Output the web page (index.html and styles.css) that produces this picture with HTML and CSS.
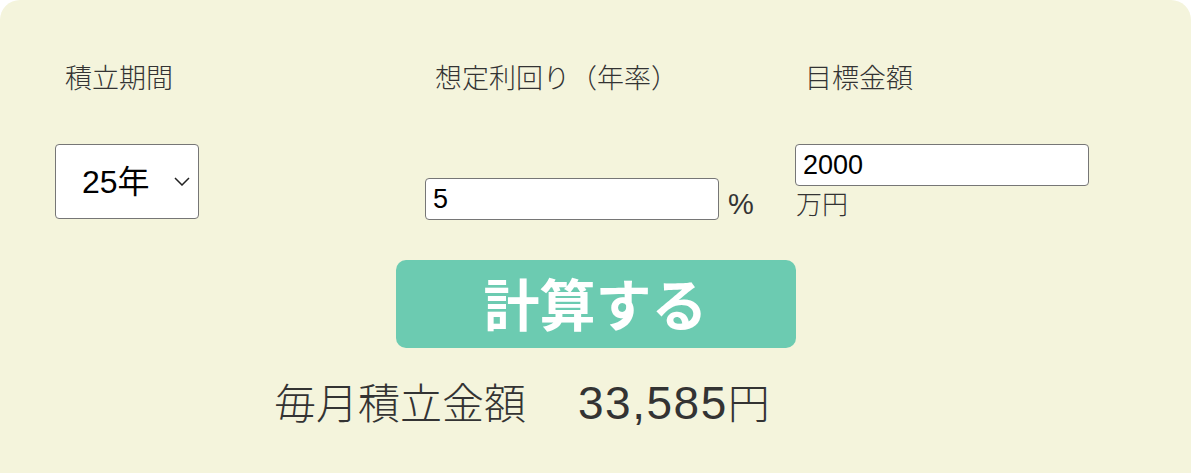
FILE: index.html
```html
<!DOCTYPE html>
<html lang="ja">
<head>
  <meta charset="UTF-8">
  <meta name="viewport" content="width=device-width, initial-scale=1.0">
  <title>積立シミュレーション</title>
  <link rel="stylesheet" href="styles.css">
</head>
<body>

  <div class="panel">
    <!-- Inputs -->
    <div class="fields">
      <label class="field-label" for="term">積立期間</label>
      <label class="field-label" for="rate">想定利回り（年率）</label>
      <label class="field-label" for="goal">目標金額</label>

      <div class="control control-term">
        <select id="term" class="select">
          <option>25年</option>
        </select>
      </div>
      <div class="control control-rate">
        <input id="rate" class="text-input" type="text" value="5">
        <span class="unit unit-pct">%</span>
      </div>
      <div class="control control-goal">
        <input id="goal" class="text-input" type="text" value="2000">
        <span class="unit">万円</span>
      </div>
    </div>

    <!-- Action -->
    <div class="action">
      <button class="calc-btn" type="button">計算する</button>
    </div>

    <!-- Result -->
    <p class="result">毎月積立金額　<span class="amount">33,585</span>円</p>
  </div>

</body>
</html>
```

FILE: styles.css
```css
body {
  margin: 0;
  background: #ffffff;
  font-family: "Noto Sans CJK JP", "Noto Sans", sans-serif;
  color: #333333;
  overflow: hidden;
}

.panel {
  background: #f4f4dc;
  border-radius: 20px 20px 0 0;
  height: 473px;
  padding: 0 0 0 55px;
  box-sizing: border-box;
}

.fields {
  display: grid;
  grid-template-columns: 370px 370px 370px;
  row-gap: 48px;
  padding-top: 57px;
}

.field-label {
  font-size: 27px;
  font-weight: 300;
  line-height: 39px;
  padding-left: 10px;
}

.control {
  display: flex;
  align-items: flex-end;
}

.control-term {
  align-self: start;
}

.control-rate {
  align-self: end;
}

.control-goal {
  flex-direction: column;
  align-items: flex-start;
  align-self: start;
}

.select {
  appearance: none;
  -webkit-appearance: none;
  width: 144px;
  height: 75px;
  box-sizing: border-box;
  border: 1px solid #767676;
  border-radius: 4px;
  background: #ffffff url("data:image/svg+xml,%3Csvg xmlns='http://www.w3.org/2000/svg' width='16' height='9' viewBox='0 0 16 9'%3E%3Cpath d='M1 1l7 7 7-7' fill='none' stroke='%23222' stroke-width='1.5'/%3E%3C/svg%3E") no-repeat right 8px center;
  padding: 0 0 0 26px;
  font-family: "Liberation Sans", "Noto Sans CJK JP", sans-serif;
  font-size: 32px;
  color: #000000;
}

.text-input {
  width: 294px;
  height: 42px;
  box-sizing: border-box;
  border: 1px solid #767676;
  border-radius: 4px;
  background: #ffffff;
  padding: 0 7px;
  font-family: "Liberation Sans", "Noto Sans CJK JP", sans-serif;
  font-size: 27px;
  color: #000000;
}

.unit {
  font-size: 26px;
  font-weight: 300;
  line-height: 34px;
  margin-left: 1px;
}

.unit-pct {
  font-family: "Liberation Sans", sans-serif;
  font-size: 29px;
  font-weight: 400;
  margin-left: 9px;
  line-height: 32px;
}

.action {
  display: flex;
  justify-content: center;
  margin: 40px 0 0 -55px;
}

.calc-btn {
  width: 400px;
  height: 88px;
  border: none;
  border-radius: 10px;
  background: #6ccbb1;
  color: #ffffff;
  font-family: "Noto Sans CJK JP", sans-serif;
  font-weight: 700;
  font-size: 56px;
  line-height: 1;
  padding: 0 0 4px;
}

.result {
  margin: 28px 0 0 219px;
  font-size: 42px;
  font-weight: 300;
  line-height: 50px;
}

.amount {
  font-family: "Liberation Sans", sans-serif;
  font-weight: 400;
  font-size: 46px;
  letter-spacing: 1.5px;
  margin-left: 10px;
}
```
